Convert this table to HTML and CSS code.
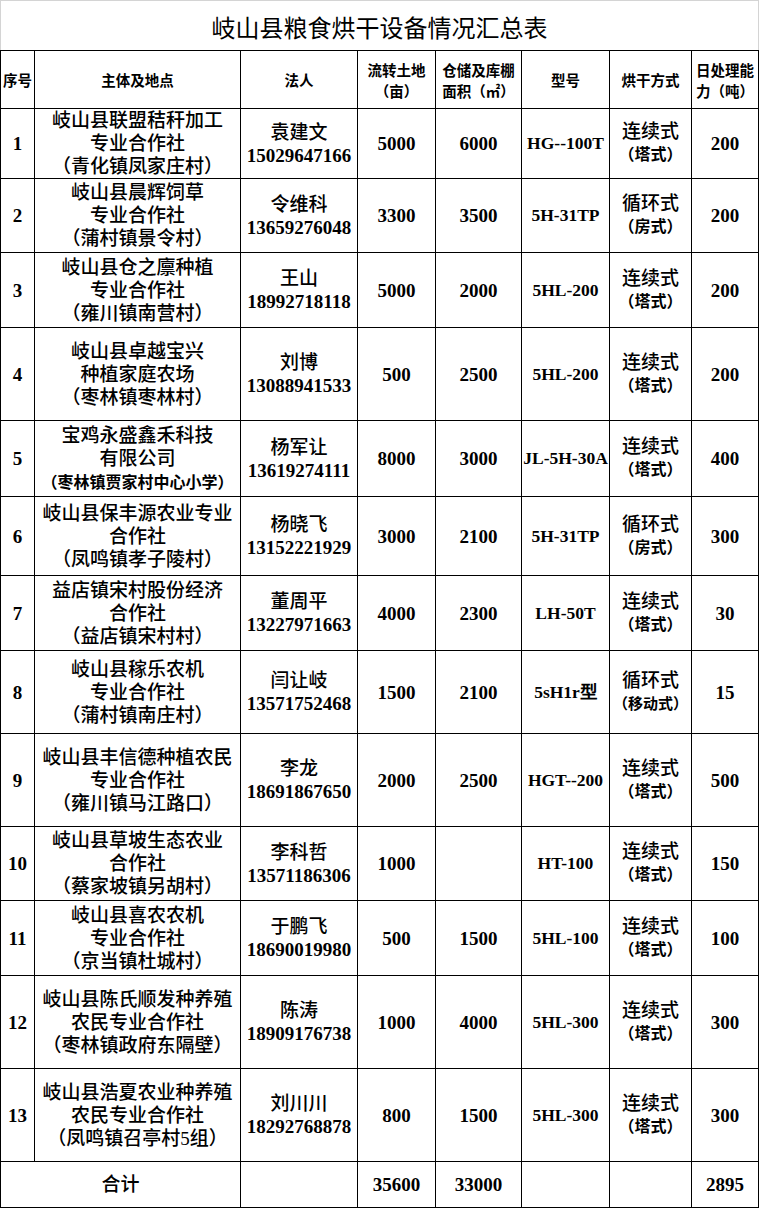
FILE: index.html
```html
<!DOCTYPE html>
<html lang="zh-CN">
<head>
<meta charset="utf-8">
<title>岐山县粮食烘干设备情况汇总表</title>
<link rel="stylesheet" href="styles.css">
</head>
<body>
<div class="sheet">
  <div class="title">岐山县粮食烘干设备情况汇总表</div>
  <table class="grid">
    <colgroup>
      <col class="c-no"><col class="c-name"><col class="c-person"><col class="c-land">
      <col class="c-store"><col class="c-model"><col class="c-way"><col class="c-cap">
    </colgroup>
    <thead>
      <tr class="h58">
        <th>序号</th><th>主体及地点</th><th>法人</th><th>流转土地<br>（亩）</th>
        <th>仓储及库棚<br>面积（㎡）</th><th>型号</th><th>烘干方式</th><th>日处理能<br>力（吨）</th>
      </tr>
    </thead>
    <tbody>
      <tr class="h70">
        <td class="num">1</td>
        <td class="cn">岐山县联盟秸秆加工<br>专业合作社<br>（青化镇凤家庄村）</td>
        <td class="cn">袁建文<br><span class="num">15029647166</span></td>
        <td class="num">5000</td><td class="num">6000</td><td class="model">HG--100T</td>
        <td class="cn way">连续式<br><span class="sub">（塔式）</span></td><td class="num">200</td>
      </tr>
      <tr class="h74">
        <td class="num">2</td>
        <td class="cn">岐山县晨辉饲草<br>专业合作社<br>（蒲村镇景令村）</td>
        <td class="cn">令维科<br><span class="num">13659276048</span></td>
        <td class="num">3300</td><td class="num">3500</td><td class="model">5H-31TP</td>
        <td class="cn way">循环式<br><span class="sub">（房式）</span></td><td class="num">200</td>
      </tr>
      <tr class="h75">
        <td class="num">3</td>
        <td class="cn">岐山县仓之廪种植<br>专业合作社<br>（雍川镇南营村）</td>
        <td class="cn">王山<br><span class="num">18992718118</span></td>
        <td class="num">5000</td><td class="num">2000</td><td class="model">5HL-200</td>
        <td class="cn way">连续式<br><span class="sub">（塔式）</span></td><td class="num">200</td>
      </tr>
      <tr class="h93">
        <td class="num">4</td>
        <td class="cn">岐山县卓越宝兴<br>种植家庭农场<br>（枣林镇枣林村）</td>
        <td class="cn">刘博<br><span class="num">13088941533</span></td>
        <td class="num">500</td><td class="num">2500</td><td class="model">5HL-200</td>
        <td class="cn way">连续式<br><span class="sub">（塔式）</span></td><td class="num">200</td>
      </tr>
      <tr class="h76">
        <td class="num">5</td>
        <td class="cn">宝鸡永盛鑫禾科技<br>有限公司<br><span class="fine">（枣林镇贾家村中心小学）</span></td>
        <td class="cn">杨军让<br><span class="num">13619274111</span></td>
        <td class="num">8000</td><td class="num">3000</td><td class="model">JL-5H-30A</td>
        <td class="cn way">连续式<br><span class="sub">（塔式）</span></td><td class="num">400</td>
      </tr>
      <tr class="h79">
        <td class="num">6</td>
        <td class="cn">岐山县保丰源农业专业<br>合作社<br>（凤鸣镇孝子陵村）</td>
        <td class="cn">杨晓飞<br><span class="num">13152221929</span></td>
        <td class="num">3000</td><td class="num">2100</td><td class="model">5H-31TP</td>
        <td class="cn way">循环式<br><span class="sub">（房式）</span></td><td class="num">300</td>
      </tr>
      <tr class="h75">
        <td class="num">7</td>
        <td class="cn">益店镇宋村股份经济<br>合作社<br>（益店镇宋村村）</td>
        <td class="cn">董周平<br><span class="num">13227971663</span></td>
        <td class="num">4000</td><td class="num">2300</td><td class="model">LH-50T</td>
        <td class="cn way">连续式<br><span class="sub">（塔式）</span></td><td class="num">30</td>
      </tr>
      <tr class="h83">
        <td class="num">8</td>
        <td class="cn">岐山县稼乐农机<br>专业合作社<br>（蒲村镇南庄村）</td>
        <td class="cn">闫让岐<br><span class="num">13571752468</span></td>
        <td class="num">1500</td><td class="num">2100</td><td class="model">5sH1r型</td>
        <td class="cn way">循环式<br><span class="sub sm">（移动式）</span></td><td class="num">15</td>
      </tr>
      <tr class="h93">
        <td class="num">9</td>
        <td class="cn">岐山县丰信德种植农民<br>专业合作社<br>（雍川镇马江路口）</td>
        <td class="cn">李龙<br><span class="num">18691867650</span></td>
        <td class="num">2000</td><td class="num">2500</td><td class="model">HGT--200</td>
        <td class="cn way">连续式<br><span class="sub">（塔式）</span></td><td class="num">500</td>
      </tr>
      <tr class="h74">
        <td class="num">10</td>
        <td class="cn">岐山县草坡生态农业<br>合作社<br>（蔡家坡镇另胡村）</td>
        <td class="cn">李科哲<br><span class="num">13571186306</span></td>
        <td class="num">1000</td><td class="num"></td><td class="model">HT-100</td>
        <td class="cn way">连续式<br><span class="sub">（塔式）</span></td><td class="num">150</td>
      </tr>
      <tr class="h75">
        <td class="num">11</td>
        <td class="cn">岐山县喜农农机<br>专业合作社<br>（京当镇杜城村）</td>
        <td class="cn">于鹏飞<br><span class="num">18690019980</span></td>
        <td class="num">500</td><td class="num">1500</td><td class="model">5HL-100</td>
        <td class="cn way">连续式<br><span class="sub">（塔式）</span></td><td class="num">100</td>
      </tr>
      <tr class="h93">
        <td class="num">12</td>
        <td class="cn">岐山县陈氏顺发种养殖<br>农民专业合作社<br>（枣林镇政府东隔壁）</td>
        <td class="cn">陈涛<br><span class="num">18909176738</span></td>
        <td class="num">1000</td><td class="num">4000</td><td class="model">5HL-300</td>
        <td class="cn way">连续式<br><span class="sub">（塔式）</span></td><td class="num">300</td>
      </tr>
      <tr class="h93">
        <td class="num">13</td>
        <td class="cn">岐山县浩夏农业种养殖<br>农民专业合作社<br>（凤鸣镇召亭村5组）</td>
        <td class="cn">刘川川<br><span class="num">18292768878</span></td>
        <td class="num">800</td><td class="num">1500</td><td class="model">5HL-300</td>
        <td class="cn way">连续式<br><span class="sub">（塔式）</span></td><td class="num">300</td>
      </tr>
      <tr class="h46">
        <td class="cn" colspan="2">合计</td>
        <td></td>
        <td class="num">35600</td><td class="num">33000</td><td></td><td></td><td class="num">2895</td>
      </tr>
    </tbody>
  </table>
</div>
</body>
</html>
```

FILE: styles.css
```css
html, body {
  margin: 0;
  padding: 0;
  background: #ffffff;
}

.sheet {
  width: 759px;
}

.title {
  box-sizing: border-box;
  height: 50px;
  padding-top: 3px;
  border: 1px solid #d4d4d4;
  border-bottom: none;
  text-align: center;
  font-family: "Noto Sans CJK SC", sans-serif;
  font-size: 24px;
  line-height: 46px;
  color: #000000;
}

.grid {
  border-collapse: collapse;
  table-layout: fixed;
  width: 758px;
  color: #000000;
}

.c-no { width: 34px; }
.c-name { width: 206px; }
.c-person { width: 117px; }
.c-land { width: 78px; }
.c-store { width: 86px; }
.c-model { width: 88px; }
.c-way { width: 82px; }
.c-cap { width: 67px; }

.grid th,
.grid td {
  border: 1px solid #000000;
  padding: 0;
  text-align: center;
  vertical-align: middle;
  overflow: visible;
  white-space: nowrap;
}

.grid th {
  font-family: "Noto Sans CJK SC", sans-serif;
  font-size: 14.5px;
  line-height: 21px;
  font-weight: bold;
}

.grid td {
  font-family: "Liberation Serif", "Noto Sans CJK SC", serif;
  font-size: 19px;
  line-height: 23px;
  font-weight: 500;
}

.grid .num {
  font-family: "Liberation Serif", serif;
  font-weight: bold;
}

.grid .model {
  font-family: "Liberation Serif", serif;
  font-size: 17.5px;
  font-weight: bold;
}

.grid .way {
  line-height: 22px;
}

.sub {
  font-size: 16px;
  font-weight: bold;
}

.sub.sm {
  font-size: 15px;
}

.fine {
  font-size: 16px;
  font-weight: bold;
}

.h46 { height: 46px; }
.h58 { height: 58px; }
.h70 { height: 70px; }
.h74 { height: 74px; }
.h75 { height: 75px; }
.h76 { height: 76px; }
.h79 { height: 79px; }
.h83 { height: 83px; }
.h93 { height: 93px; }
```
